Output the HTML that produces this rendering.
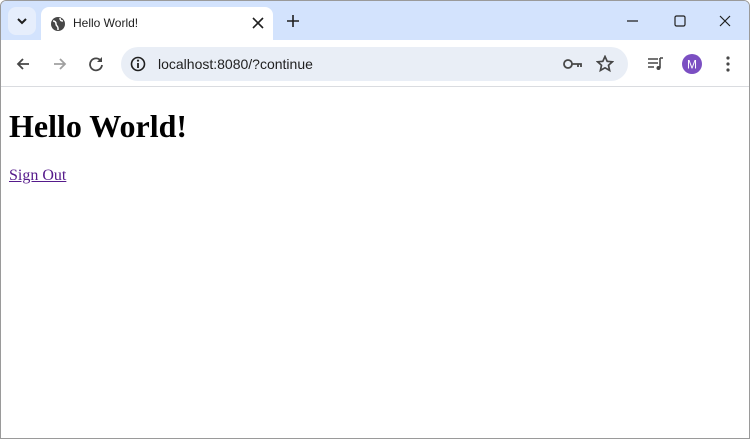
<!DOCTYPE html>
<html><head><style>
*{margin:0;padding:0;box-sizing:border-box}
body{width:750px;height:439px;overflow:hidden;background:#fff;position:relative;font-family:"Liberation Sans",sans-serif}
.win{position:absolute;left:0;top:0;width:750px;height:439px;border:1px solid #9a9a9a;border-radius:6px 6px 0 0;overflow:hidden}
.tabbar{position:absolute;left:0;top:0;width:750px;height:40px;background:#d3e3fd}
.tab{position:absolute;left:40px;top:6px;width:232px;height:34px;background:#fff;border-radius:8px 8px 0 0}
.tab .t{position:absolute;left:32px;top:9px;font-size:12px;color:#1f1f1f}
.dd{position:absolute;left:7px;top:6px;width:28px;height:28px;background:#e6eefc;border-radius:8px}
.toolbar{position:absolute;left:0;top:39px;width:750px;height:47px;background:#fff;border-bottom:1px solid #dadce0}
.omni{position:absolute;left:120px;top:7px;width:507px;height:34px;background:#e9eef6;border-radius:17px}
.url{position:absolute;left:37px;top:9px;font-size:14px;color:#1f1f1f}
svg{position:absolute}
h1{position:absolute;left:8px;top:107px;font:bold 32px "Liberation Serif",serif}
a{position:absolute;left:8px;top:166px;font:16px "Liberation Serif",serif;color:#551a8b}
</style></head><body><div class="win">
<div class="tabbar">
<div class="dd"></div>
<svg style="left:14px;top:13px" width="14" height="14"><path d="M3 5l4 4 4-4" stroke="#1f1f1f" stroke-width="2" fill="none"/></svg>
<div class="tab"><svg style="left:9px;top:9px" width="16" height="16"><circle cx="8" cy="8" r="7" fill="#474747"/><path d="M3 5c2 0 3 1 3 3s2 2 2 4v2M10 2c0 2 1 3 3 3" stroke="#fff" stroke-width="1.5" fill="none"/></svg><span class="t">Hello World!</span>
<svg style="left:209px;top:8px" width="16" height="16"><path d="M3 3l10 10M13 3L3 13" stroke="#1f1f1f" stroke-width="1.6"/></svg></div>
<svg style="left:284px;top:12px" width="16" height="16"><path d="M8 2v12M2 8h12" stroke="#1f1f1f" stroke-width="1.6"/></svg>
<svg style="left:625px;top:13px" width="14" height="14"><path d="M1 7h11" stroke="#1f1f1f" stroke-width="1.2"/></svg>
<svg style="left:672px;top:13px" width="14" height="14"><rect x="2" y="2" width="10" height="10" rx="1.5" stroke="#1f1f1f" stroke-width="1.2" fill="none"/></svg>
<svg style="left:717px;top:13px" width="14" height="14"><path d="M2 2l10 10M12 2L2 12" stroke="#1f1f1f" stroke-width="1.2"/></svg>
</div>
<div class="toolbar">
<svg style="left:14px;top:16px" width="16" height="16"><path d="M14 8H3M8 3L3 8l5 5" stroke="#474747" stroke-width="1.8" fill="none"/></svg>
<svg style="left:51px;top:16px" width="16" height="16"><path d="M2 8h11M8 3l5 5-5 5" stroke="#a0a0a0" stroke-width="1.8" fill="none"/></svg>
<svg style="left:87px;top:16px" width="16" height="16"><path d="M13 5A6 6 0 1 0 14 9" stroke="#474747" stroke-width="1.8" fill="none"/><path d="M14 1v5H9z" fill="#474747"/></svg>
<div class="omni">
<svg style="left:9px;top:9px" width="16" height="16"><circle cx="8" cy="8" r="6.5" stroke="#1f1f1f" stroke-width="1.6" fill="none"/><path d="M8 7v5" stroke="#1f1f1f" stroke-width="1.8"/><circle cx="8" cy="4.6" r="1.1" fill="#1f1f1f"/></svg>
<span class="url">localhost:8080/?continue</span>
<svg style="left:442px;top:10px" width="20" height="14"><circle cx="5" cy="7" r="4" stroke="#474747" stroke-width="1.8" fill="none"/><path d="M9 7h9v3M15 7v3" stroke="#474747" stroke-width="1.8" fill="none"/></svg>
<svg style="left:475px;top:8px" width="18" height="18"><path d="M9 1.5l2.2 4.8 5.2.5-3.9 3.5 1.1 5.1L9 12.8l-4.6 2.6 1.1-5.1L1.6 6.8l5.2-.5z" stroke="#474747" stroke-width="1.7" fill="none"/></svg>
</div>
<svg style="left:646px;top:16px" width="18" height="16"><path d="M1 3h10M1 7h10M1 11h6" stroke="#474747" stroke-width="1.6"/><path d="M13 2v10" stroke="#474747" stroke-width="1.6"/><path d="M13 2h3" stroke="#474747" stroke-width="1.6"/><circle cx="11.5" cy="12" r="2" fill="#474747"/></svg>
<svg style="left:680px;top:13px" width="22" height="22"><circle cx="11" cy="11" r="10" fill="#7b4fc2"/><text x="11" y="15.5" font-size="12" fill="#fff" text-anchor="middle" font-family="Liberation Sans">M</text></svg>
<svg style="left:724px;top:15px" width="6" height="18"><circle cx="3" cy="3" r="1.6" fill="#474747"/><circle cx="3" cy="9" r="1.6" fill="#474747"/><circle cx="3" cy="15" r="1.6" fill="#474747"/></svg>
</div>
<h1>Hello World!</h1>
<a href="#">Sign Out</a>
</div></body></html>
